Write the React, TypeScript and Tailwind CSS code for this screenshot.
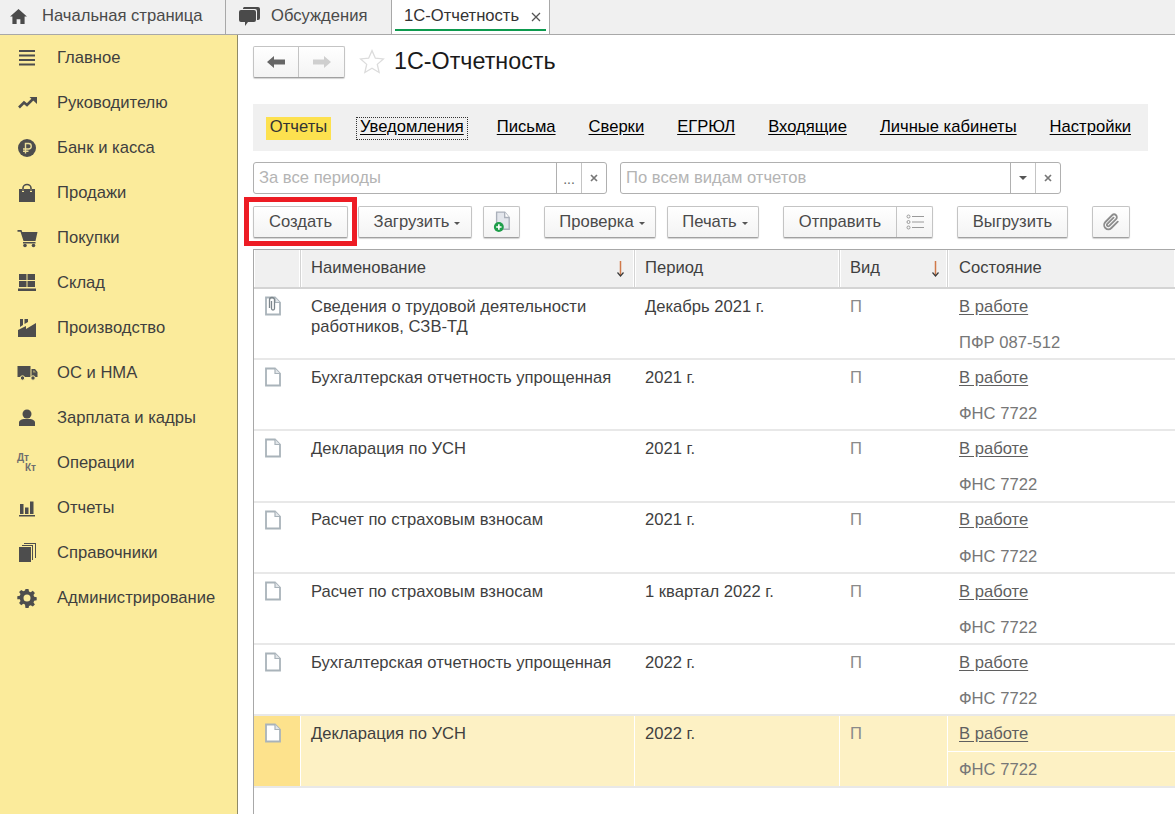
import { ReactNode } from "react";

const gray = "#4d4d4d";

function Icon({ children, className = "w-5 h-5" }: { children: ReactNode; className?: string }) {
  return (
    <svg viewBox="0 0 20 20" className={className} fill={gray}>
      {children}
    </svg>
  );
}

const menu: { label: string; icon: ReactNode }[] = [
  {
    label: "Главное",
    icon: (
      <Icon>
        <path d="M2 2h16v2H2zM2 6.500h16v2H2zM2 11h16v2H2zM2 15.500h16v2H2z" />
      </Icon>
    ),
  },
  {
    label: "Руководителю",
    icon: (
      <Icon>
        <path d="M2 14.500l5-5 3 2.500 6-6" fill="none" stroke={gray} strokeWidth="2.600" />
        <path d="M12.500 4H20v7z" />
      </Icon>
    ),
  },
  {
    label: "Банк и касса",
    icon: (
      <Icon>
        <circle cx="10" cy="10" r="9" />
        <path d="M8.500 15.500V5.500h3a2.500 2.500 0 0 1 0 5.500H6M6 13.300h5.500" fill="none" stroke="#e9dc98" strokeWidth="1.400" />
      </Icon>
    ),
  },
  {
    label: "Продажи",
    icon: (
      <Icon>
        <path d="M6 8V5a4 3.500 0 0 1 8 0v3" fill="none" stroke={gray} strokeWidth="1.600" />
        <path d="M2 6h3v3h2V6h6v3h2V6h3v13H2z" />
      </Icon>
    ),
  },
  {
    label: "Покупки",
    icon: (
      <Icon className="w-[21px] h-5">
        <path d="M0 2h4l.7 2H20l-2 9H6L3 3.800H0z" />
        <path d="M5.500 14H18v1.500H5.500z" />
        <circle cx="7.500" cy="17.500" r="1.800" />
        <circle cx="16" cy="17.500" r="1.800" />
      </Icon>
    ),
  },
  {
    label: "Склад",
    icon: (
      <Icon className="w-5 h-5">
        <path d="M2 1h7.500v6H2zM10.500 1H18v6h-7.500zM2 8h7.500v6H2zM10.500 8H18v6h-7.500zM1 15.500h18V18H1z" />
      </Icon>
    ),
  },
  {
    label: "Производство",
    icon: (
      <Icon>
        <path d="M1 19v-7l8-4v3l10-6v14z" />
        <path d="M3 1h3v6l-3 2zM7.500 1H11v3l-3.500 2z" />
      </Icon>
    ),
  },
  {
    label: "ОС и НМА",
    icon: (
      <Icon className="w-[21px] h-5">
        <path d="M0 3h13v11H0zM14 6h3.500l2.500 3v5h-6z" />
        <path d="M15.500 7.500h1.500l1.500 2h-3z" fill="#9a9468" />
        <circle cx="5" cy="15" r="2.200" stroke="#fbeb9b" />
        <circle cx="15.500" cy="15" r="2.200" stroke="#fbeb9b" />
      </Icon>
    ),
  },
  {
    label: "Зарплата и кадры",
    icon: (
      <Icon>
        <circle cx="10" cy="6" r="4.500" />
        <path d="M2 18v-3.500c0-2 3-3.500 5.500-3.500h5c2.500 0 5.500 1.500 5.500 3.500V18z" />
      </Icon>
    ),
  },
  {
    label: "Операции",
    icon: (
      <div className="w-[19px] h-5 flex flex-col text-[10px] leading-[10px] font-bold text-[#6e6e6e]">
        <span>Дт</span>
        <span className="self-end">Кт</span>
      </div>
    ),
  },
  {
    label: "Отчеты",
    icon: (
      <Icon>
        <path d="M3 6h3.500v10H3zM8 9.500h3.500V16H8zM13 3.500h3.500V16H13zM2 17h16v1.500H2z" />
      </Icon>
    ),
  },
  {
    label: "Справочники",
    icon: (
      <Icon>
        <path d="M2 4h12v15H2z" />
        <path d="M15 3H5V2h11v15h-1zM18 1H7V0h12v15h-1z" />
      </Icon>
    ),
  },
  {
    label: "Администрирование",
    icon: (
      <Icon>
        <path
          fillRule="evenodd"
          d="M8.500 1h3l.5 2.500 1.700.7 2.100-1.400 2.100 2.100-1.400 2.100.7 1.700 2.500.5v3l-2.500.5-.7 1.700 1.400 2.100-2.100 2.100-2.100-1.400-1.700.7-.5 2.500h-3L8 16.500l-1.700-.7-2.100 1.400-2.100-2.100 1.400-2.100-.7-1.700L.3 11.300v-3l2.500-.5.7-1.700-1.400-2.100 2.100-2.100 2.100 1.400 1.700-.7zM10 6.500a3.500 3.500 0 1 0 0 7 3.500 3.500 0 0 0 0-7z"
        />
      </Icon>
    ),
  },
];

const btn =
  "h-[32px] flex items-center justify-center rounded-[2px] border border-[#c4c4c4] border-b-[#a0a0a0] bg-gradient-to-b from-white to-[#f3f3f3] shadow-[0_1px_1px_rgba(0,0,0,0.18)] text-[#4a4a4a]";

function Caret() {
  return <span className="ml-[5px] mt-[3px] w-0 h-0 border-x-[3px] border-x-transparent border-t-[3px] border-t-[#555555]" />;
}

function TabBar() {
  return (
    <div className="h-[35px] flex bg-[#f0f0f0] border-b border-[#a8a8a8] text-[#4a4a4a] shrink-0">
      <div className="w-[226px] border-r border-[#a8a8a8] flex items-center pb-[7px] pt-[6px]">
        <svg viewBox="0 0 18 16" className="ml-[10px] w-[17px] h-[15px]" fill="#4a4a4a">
          <path d="M9 0l9 8h-2.500v8H11v-5H7v5H2.500V8H0z" />
        </svg>
        <span className="ml-[15px]">Начальная страница</span>
      </div>
      <div className="w-[166px] border-r border-[#a8a8a8] flex items-center pb-[7px] pt-[6px]">
        <svg viewBox="0 0 21 19" className="ml-[13px] w-[21px] h-[19px]" fill="#4a4a4a">
          <path d="M5 0h14a2 2 0 0 1 2 2v9a2 2 0 0 1-2 2h-1V4a2 2 0 0 0-2-2H4a2 2 0 0 1 1-2z" />
          <path d="M2 3h13a2 2 0 0 1 2 2v8a2 2 0 0 1-2 2H9l-3 4v-4H2a2 2 0 0 1-2-2V5a2 2 0 0 1 2-2z" />
        </svg>
        <span className="ml-[11px]">Обсуждения</span>
      </div>
      <div className="w-[158px] border-r border-[#a8a8a8] bg-white relative flex items-center pb-[7px] pt-[6px]">
        <span className="ml-[12px] text-[#333333]">1С-Отчетность</span>
        <svg viewBox="0 0 10 10" className="ml-[12px] w-[10px] h-[10px]" stroke="#555555" strokeWidth="1.300">
          <path d="M1 1l8 8M9 1l-8 8" />
        </svg>
        <span className="absolute left-[3px] right-[3px] bottom-[3px] h-[2px] bg-[#0d9a4e]" />
      </div>
    </div>
  );
}

function Sidebar() {
  return (
    <div className="w-[238px] shrink-0 bg-[#fbeb9b] border-r border-[#8f8a66] text-[#3f3f3f]">
      {menu.map((m) => (
        <div key={m.label} className="h-[45px] flex items-center">
          <div className="w-[57px] pl-[17px] flex items-center shrink-0">{m.icon}</div>
          <span className="mt-[2px]">{m.label}</span>
        </div>
      ))}
    </div>
  );
}

function Header() {
  return (
    <div className="flex items-start pt-[11px] h-[69px]">
      <div className={`${btn} w-[92px] h-[30px]`}>
        <div className="w-[45px] h-full border-r border-[#c4c4c4] flex items-center justify-center">
          <svg viewBox="0 0 18 12" className="w-[18px] h-[12px]" fill="#666666">
            <path d="M0 6l7-6v3.500h11v5H7V12z" />
          </svg>
        </div>
        <div className="flex-1 flex items-center justify-center">
          <svg viewBox="0 0 18 12" className="w-[18px] h-[12px]" fill="#cfcfcf">
            <path d="M18 6l-7-6v3.500H0v5h11V12z" />
          </svg>
        </div>
      </div>
      <svg viewBox="0 0 24 24" className="ml-[14px] mt-[3px] w-[26px] h-[26px]" fill="none" stroke="#dcdcdc" strokeWidth="1.200">
        <path d="M12 1.500l3.100 7 7.400.7-5.600 5 1.700 7.500-6.600-4-6.600 4 1.700-7.500-5.600-5 7.400-.7z" />
      </svg>
      <h1 className="ml-[9px] text-[23.300px] leading-[30px] text-[#1a1a1a]">1С-Отчетность</h1>
    </div>
  );
}

function Links() {
  const link = "underline underline-offset-2 -mt-[2px]";
  return (
    <div className="h-[47px] w-[895px] bg-[#f0f0f0] flex items-center pl-[13px] pt-[1px] text-black">
      <span className="h-[23px] w-[65px] pb-[2px] bg-[#fde14f] flex items-center justify-center text-[#333333]">Отчеты</span>
      <span className="ml-[25px] px-[3px] pb-[2px] h-[23px] flex items-center border border-dotted border-[#333333] underline underline-offset-2">
        Уведомления
      </span>
      <span className={`ml-[29px] ${link}`}>Письма</span>
      <span className={`ml-[33px] ${link}`}>Сверки</span>
      <span className={`ml-[33px] ${link}`}>ЕГРЮЛ</span>
      <span className={`ml-[33px] ${link}`}>Входящие</span>
      <span className={`ml-[33px] ${link}`}>Личные кабинеты</span>
      <span className={`ml-[33px] ${link}`}>Настройки</span>
    </div>
  );
}

function Filter({ text, width, inner, caret }: { text: string; width: string; inner: string; caret?: boolean }) {
  return (
    <div className={`${width} h-[32px] flex rounded-[3px] border border-[#b0b0b0] bg-white`}>
      <div className={`${inner} border-r border-[#b0b0b0] pl-[5px] flex items-center text-[#b4b4b4]`}>{text}</div>
      <div className="w-[25px] border-r border-[#c4c4c4] flex items-center justify-center text-[#666666]">
        {caret ? <span className="w-0 h-0 border-x-[4px] border-x-transparent border-t-[4px] border-t-[#555555]" /> : <span className="mt-[2px] text-[14px]">...</span>}
      </div>
      <div className="flex-1 flex items-center justify-center">
        <svg viewBox="0 0 8 8" className="w-[8px] h-[8px]" stroke="#777777" strokeWidth="1.700">
          <path d="M1 1l6 6M7 1l-6 6" />
        </svg>
      </div>
    </div>
  );
}

function Toolbar() {
  return (
    <div className="relative flex mt-[12px] h-[32px]">
      <button className={`${btn} w-[95px]`}>Создать</button>
      <button className={`${btn} w-[114px] ml-[10px] pl-[4px]`}>
        Загрузить
        <Caret />
      </button>
      <button className={`${btn} w-[37px] ml-[11px]`}>
        <svg viewBox="0 0 20 24" className="w-[18px] h-[22px]">
          <path d="M4 1h9l5 6v13H4z" fill="#e3e6ec" stroke="#aab0ba" strokeWidth="1.500" />
          <path d="M13 1v6h5" fill="#ffffff" stroke="#aab0ba" strokeWidth="1.500" />
          <circle cx="6.500" cy="17.500" r="5.500" fill="#1e9e4a" />
          <path d="M6.500 14.500v6M3.500 17.500h6" stroke="#ffffff" strokeWidth="1.800" />
        </svg>
      </button>
      <button className={`${btn} w-[112px] ml-[24px] pl-[4px]`}>
        Проверка
        <Caret />
      </button>
      <button className={`${btn} w-[92px] ml-[11px] pl-[4px]`}>
        Печать
        <Caret />
      </button>
      <div className={`${btn} w-[150px] ml-[24px]`}>
        <div className="w-[113px] h-full border-r border-[#c4c4c4] flex items-center justify-center">Отправить</div>
        <div className="flex-1 flex items-center justify-center">
          <svg viewBox="0 0 18 16" className="w-[18px] h-[16px]" fill="none" stroke="#9a9a9a">
            <circle cx="2.500" cy="2.500" r="1.500" />
            <circle cx="2.500" cy="8" r="1.500" />
            <circle cx="2.500" cy="13.500" r="1.500" />
            <path d="M6 2.500h12M6 8h12M6 13.500h12" />
          </svg>
        </div>
      </div>
      <button className={`${btn} w-[111px] ml-[24px]`}>Выгрузить</button>
      <button className={`${btn} w-[38px] ml-[24px]`}>
        <svg viewBox="0 0 24 24" className="w-[18px] h-[18px]" fill="none" stroke="#8c8c8c" strokeWidth="2.400" strokeLinecap="round">
          <path d="M21 11.500l-8.500 8.500a5.500 5.500 0 0 1-8-8l9-9a3.600 3.600 0 0 1 5.200 5.200l-9 9a1.800 1.800 0 0 1-2.600-2.600l8.300-8.300" />
        </svg>
      </button>
      <div className="absolute left-[-9px] top-[-9px] w-[113px] h-[49px] border-[5px] border-[#ed1c24]" />
    </div>
  );
}

function DocIcon({ clip }: { clip?: boolean }) {
  return (
    <svg viewBox="0 0 18 20" className="w-[18px] h-[20px]">
      <path d="M2 1.500h9l5 5v12H2z" fill="#ffffff" stroke="#a9b3ba" strokeWidth="1.800" />
      <path d="M11 1.500v5h5" fill="#e3e7ea" stroke="#a9b3ba" strokeWidth="1.200" />
      {clip && <path d="M7.500 5v7.500a1.500 1.500 0 0 0 3 0V4a2.500 2.500 0 0 0-5 0v8" fill="none" stroke="#7d868c" strokeWidth="1.300" />}
    </svg>
  );
}

const rows = [
  { name: ["Сведения о трудовой деятельности", "работников, СЗВ-ТД"], period: "Декабрь 2021 г.", org: "ПФР 087-512", h: "h-[71px]", pt: "pt-[8px]", clip: true },
  { name: ["Бухгалтерская отчетность упрощенная"], period: "2021 г.", org: "ФНС 7722", h: "h-[71px]", pt: "pt-[8px]" },
  { name: ["Декларация по УСН"], period: "2021 г.", org: "ФНС 7722", h: "h-[72px]", pt: "pt-[8px]" },
  { name: ["Расчет по страховым взносам"], period: "2021 г.", org: "ФНС 7722", h: "h-[71px]", pt: "pt-[7px]" },
  { name: ["Расчет по страховым взносам"], period: "1 квартал 2022 г.", org: "ФНС 7722", h: "h-[71px]", pt: "pt-[8px]" },
  { name: ["Бухгалтерская отчетность упрощенная"], period: "2022 г.", org: "ФНС 7722", h: "h-[71px]", pt: "pt-[8px]" },
  { name: ["Декларация по УСН"], period: "2022 г.", org: "ФНС 7722", h: "h-[72px]", pt: "pt-[8px]", selected: true },
];

const cols = "grid grid-cols-[47px_334px_205px_108px_1fr]";

function SortArrow() {
  return (
    <svg viewBox="0 0 9 16" className="w-[9px] h-[16px]" fill="none">
      <path d="M4.500 0v14" stroke="#d0794a" strokeWidth="1.500" />
      <path d="M1.500 11.500l3 3.500 3-3.500" stroke="#3a3a3a" strokeWidth="1.200" />
    </svg>
  );
}

function Table() {
  const head = "h-[37px] bg-[#f0f0f0] flex items-center justify-between pl-[10px] pr-[9px] border-r border-[#d4d4d4] shadow-[inset_1px_0_0_#ffffff,inset_-1px_0_0_#ffffff] text-[#3f3f3f]";
  return (
    <div className="mt-[11px] flex-1 border-l border-t border-[#a8a8a8] text-[#3f3f3f]">
      <div className={`${cols} border-b-2 border-[#d4d4d4]`}>
        <div className={head} />
        <div className={head}>
          Наименование
          <SortArrow />
        </div>
        <div className={head}>Период</div>
        <div className={head}>
          Вид
          <div className="-mr-[2px]">
            <SortArrow />
          </div>
        </div>
        <div className={`${head} border-r-0 pl-[11px]`}>Состояние</div>
      </div>
      {rows.map((r, i) => {
        const cell = r.selected ? "bg-[#fdf1c4] border-r border-white" : "";
        return (
          <div key={i} className={`${cols} ${r.h} border-b-2 border-[#e8e8e8]`}>
            <div className={`${r.selected ? "bg-[#fde28c] border-r border-white" : ""} pt-[7px] pl-[10px]`}>
              <DocIcon clip={r.clip} />
            </div>
            <div className={`${cell} pl-[10px] ${r.pt} leading-[20px]`}>
              {r.name.map((n) => (
                <div key={n}>{n}</div>
              ))}
            </div>
            <div className={`${cell} pl-[10px] ${r.pt} leading-[20px]`}>{r.period}</div>
            <div className={`${cell} pl-[10px] ${r.pt} leading-[20px] text-[#8a8a8a]`}>П</div>
            <div className={`${r.selected ? "bg-[#fdf1c4]" : ""} leading-[20px] text-[#777777]`}>
              <div className={`h-[36px] pl-[11px] ${r.pt} ${r.selected ? "border-b border-white" : ""}`}>
                <span className="underline underline-offset-2 text-[#5f5f5f]">В работе</span>
              </div>
              <div className="pl-[11px] pt-[8px]">{r.org}</div>
            </div>
          </div>
        );
      })}
    </div>
  );
}

export default function App() {
  return (
    <div className="w-[1175px] h-[814px] overflow-hidden flex flex-col bg-white text-[16.600px] font-['Liberation_Sans',Arial,sans-serif]">
      <TabBar />
      <div className="flex flex-1 min-h-0">
        <Sidebar />
        <main className="flex-1 pl-[15px] flex flex-col min-w-0">
          <Header />
          <Links />
          <div className="flex mt-[11px] gap-[13px]">
            <Filter text="За все периоды" width="w-[354px]" inner="w-[303px]" />
            <Filter text="По всем видам отчетов" width="w-[441px]" inner="w-[390px]" caret />
          </div>
          <Toolbar />
          <Table />
        </main>
      </div>
    </div>
  );
}
